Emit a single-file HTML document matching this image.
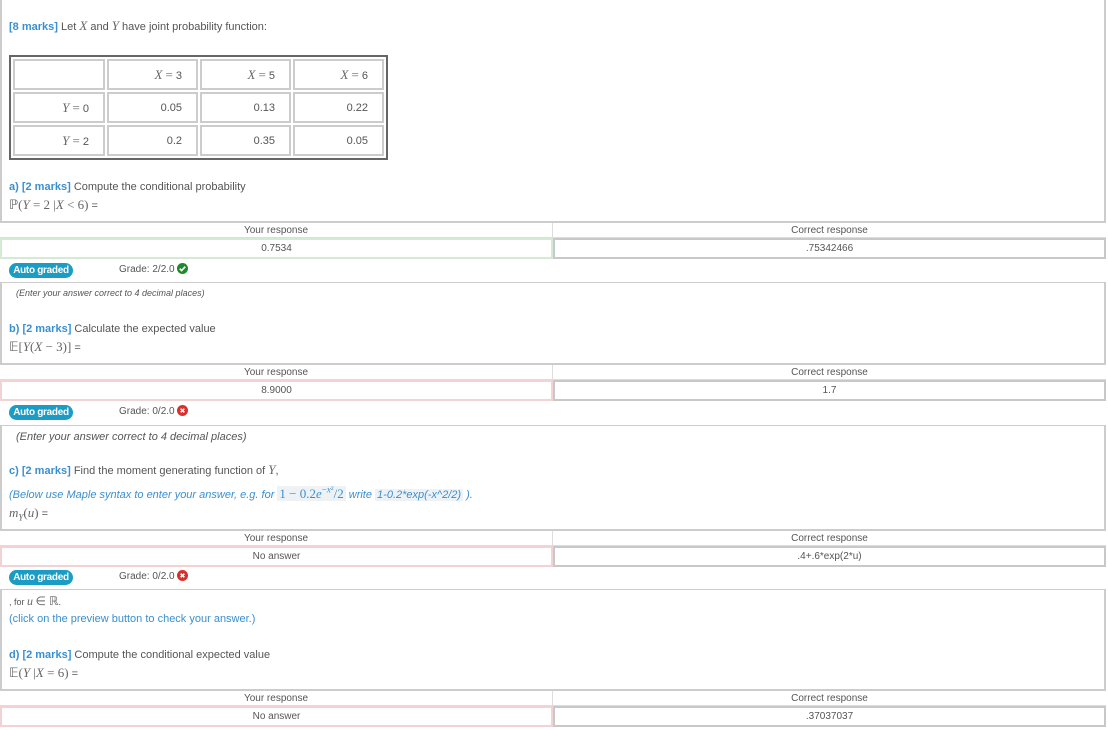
<!DOCTYPE html>
<html><head><meta charset="utf-8">
<style>
*{margin:0;padding:0;box-sizing:border-box}
body{width:1108px;height:730px;background:#fff;font-family:"Liberation Sans",sans-serif;font-size:11px;color:#555;position:relative;overflow:hidden}
.a{position:absolute;white-space:nowrap}
.t{line-height:14px}
.b{color:#3a8fd0}
.bb{color:#3a8fd0;font-weight:bold}
.m{font-family:"Liberation Serif",serif;font-size:13px;color:#666}
.mi{font-family:"Liberation Serif",serif;font-style:italic;font-size:13px;color:#666}
.vl{position:absolute;background:#ccc;width:2px}
.hl{position:absolute;background:#ccc;height:1px}
table.j{position:absolute;left:9px;top:55px;width:379px;height:104px;border:2px solid #666;border-collapse:separate;border-spacing:2px}
table.j td{border:2px solid #ccc;text-align:right;padding-right:14px;font-size:11px;color:#555;height:31px}
.badge{position:absolute;left:9px;width:64px;height:15px;border-radius:8px;background:#1a9cc4;color:#fff;font-weight:bold;font-size:10px;text-align:center;line-height:15px;letter-spacing:-0.3px}
.grade{position:absolute;left:119px;font-size:10px;line-height:14px;color:#555}
.ic{display:inline-block;width:11px;height:11px;vertical-align:-2px;margin-left:2px}
.rh{position:absolute;left:0;width:1106px;height:17px;border-top:2px solid #ccc;border-bottom:1px solid #ddd}
.rh div{position:absolute;top:0;width:553px;text-align:center;font-size:10px;line-height:15px;color:#555}
.cell{position:absolute;height:21px;text-align:center;font-size:10px;line-height:17px;color:#555}
.g{border:2px solid #d4ead4}
.r{border:2px solid #f2d2d2}
.c{border:2px solid #c8c8c8}
.hint{font-style:italic;color:#555}
.hl2{background:#eef2f5;padding:0 2px}
sup{line-height:0}
</style></head><body>

<div class="vl" style="left:0;top:0;height:222px"></div>
<div class="vl" style="left:1104px;top:0;height:222px"></div>

<div class="a t" style="left:9px;top:19px"><span class="bb">[8 marks]</span> Let <span class="mi">X</span> and <span class="mi">Y</span> have joint probability function:</div>

<table class="j">
<tr><td style="width:92px"></td><td><span class="mi">X</span> <span class="m">=</span> 3</td><td><span class="mi">X</span> <span class="m">=</span> 5</td><td><span class="mi">X</span> <span class="m">=</span> 6</td></tr>
<tr><td><span class="mi">Y</span> <span class="m">=</span> 0</td><td>0.05</td><td>0.13</td><td>0.22</td></tr>
<tr><td><span class="mi">Y</span> <span class="m">=</span> 2</td><td>0.2</td><td>0.35</td><td>0.05</td></tr>
</table>

<div class="a t" style="left:9px;top:180px"><span class="bb">a) [2 marks]</span> Compute the conditional probability</div>
<div class="a t" style="left:9px;top:198px"><span class="m">ℙ(<i>Y</i> = 2 |<i>X</i> &lt; 6)</span> =</div>

<div class="rh" style="top:221px"><div style="left:0;border-right:1px solid #ddd">Your response</div><div style="left:553px">Correct response</div></div>
<div class="cell g" style="left:0;top:238px;width:553px">0.7534</div>
<div class="cell c" style="left:553px;top:238px;width:553px">.75342466</div>
<div class="badge" style="top:263px">Auto graded</div>
<div class="grade" style="top:263px">Grade: 2/2.0<svg class="ic" viewBox="0 0 12 12"><circle cx="6" cy="6" r="6" fill="#1c8a2a"/><path d="M3 6.2l2 2 4-4.2" stroke="#fff" stroke-width="1.8" fill="none"/></svg></div>

<div class="hl" style="left:0;top:282px;width:1106px"></div>
<div class="vl" style="left:0;top:282px;height:82px"></div>
<div class="vl" style="left:1104px;top:282px;height:82px"></div>
<div class="a hint" style="left:16px;top:288px;font-size:9px">(Enter your answer correct to 4 decimal places)</div>
<div class="a t" style="left:9px;top:322px"><span class="bb">b) [2 marks]</span> Calculate the expected value</div>
<div class="a t" style="left:9px;top:340px"><span class="m">𝔼[<i>Y</i>(<i>X</i> − 3)]</span> =</div>

<div class="rh" style="top:363px"><div style="left:0;border-right:1px solid #ddd">Your response</div><div style="left:553px">Correct response</div></div>
<div class="cell r" style="left:0;top:380px;width:553px">8.9000</div>
<div class="cell c" style="left:553px;top:380px;width:553px">1.7</div>
<div class="badge" style="top:405px">Auto graded</div>
<div class="grade" style="top:405px">Grade: 0/2.0<svg class="ic" viewBox="0 0 12 12"><circle cx="6" cy="6" r="6" fill="#d9302c"/><path d="M4 4l4 4M8 4l-4 4" stroke="#fff" stroke-width="1.8"/></svg></div>

<div class="hl" style="left:0;top:425px;width:1106px"></div>
<div class="vl" style="left:0;top:425px;height:105px"></div>
<div class="vl" style="left:1104px;top:425px;height:105px"></div>
<div class="a hint t" style="left:16px;top:430px">(Enter your answer correct to 4 decimal places)</div>
<div class="a t" style="left:9px;top:463px"><span class="bb">c) [2 marks]</span> Find the moment generating function of <span class="mi">Y</span>,</div>
<div class="a t b" style="left:9px;top:487px;font-style:italic">(Below use Maple syntax to enter your answer, e.g. for <span class="hl2 m" style="font-style:normal;color:#3a8fd0">1 − 0.2<i>e</i><sup style="font-size:9px">−<i>x</i>²</sup>/2</span> write <span class="hl2">1-0.2*exp(-x^2/2)</span> ).</div>
<div class="a t" style="left:9px;top:506px"><span class="m"><i>m<sub style="font-size:9px;line-height:0">Y</sub></i>(<i>u</i>)</span> =</div>

<div class="rh" style="top:529px"><div style="left:0;border-right:1px solid #ddd">Your response</div><div style="left:553px">Correct response</div></div>
<div class="cell r" style="left:0;top:546px;width:553px">No answer</div>
<div class="cell c" style="left:553px;top:546px;width:553px">.4+.6*exp(2*u)</div>
<div class="badge" style="top:570px">Auto graded</div>
<div class="grade" style="top:570px">Grade: 0/2.0<svg class="ic" viewBox="0 0 12 12"><circle cx="6" cy="6" r="6" fill="#d9302c"/><path d="M4 4l4 4M8 4l-4 4" stroke="#fff" stroke-width="1.8"/></svg></div>

<div class="hl" style="left:0;top:589px;width:1106px"></div>
<div class="vl" style="left:0;top:589px;height:101px"></div>
<div class="vl" style="left:1104px;top:589px;height:101px"></div>
<div class="a t" style="left:9px;top:594px;font-size:9px">, for <span class="mi" style="font-size:12px">u</span> <span class="m" style="font-size:12px">∈ ℝ</span>.</div>
<div class="a t b" style="left:9px;top:612px">(click on the preview button to check your answer.)</div>
<div class="a t" style="left:9px;top:648px"><span class="bb">d) [2 marks]</span> Compute the conditional expected value</div>
<div class="a t" style="left:9px;top:666px"><span class="m">𝔼(<i>Y</i> |<i>X</i> = 6)</span> =</div>

<div class="rh" style="top:689px"><div style="left:0;border-right:1px solid #ddd">Your response</div><div style="left:553px">Correct response</div></div>
<div class="cell r" style="left:0;top:706px;width:553px">No answer</div>
<div class="cell c" style="left:553px;top:706px;width:553px">.37037037</div>

</body></html>
